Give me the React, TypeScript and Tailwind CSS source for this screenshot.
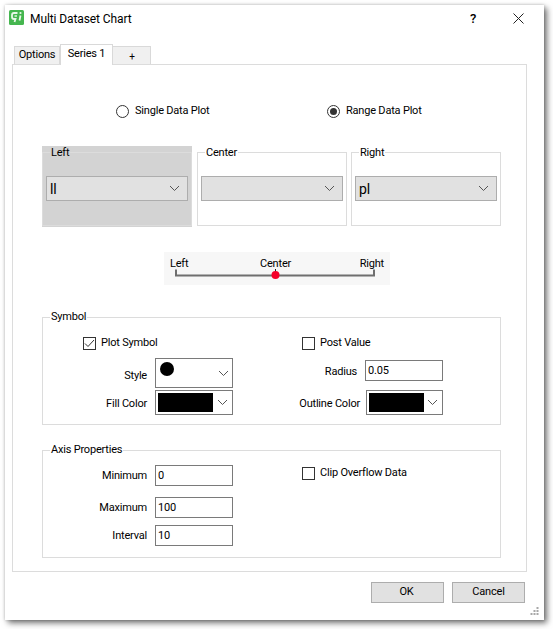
const font = "font-['Roboto','Liberation_Sans',sans-serif]";

function Chevron() {
  return (
    <svg width="11" height="7" viewBox="0 0 11 7" className="shrink-0">
      <path d="M1 1 L5.5 5.5 L10 1" fill="none" stroke="#555" strokeWidth="1" />
    </svg>
  );
}

function AppIcon() {
  return (
    <svg width="15" height="15" viewBox="0 0 15 15" className="-mt-[2px]">
      <rect width="15" height="15" rx="1.5" fill="#45b64f" />
      <path d="M8.5 3 H5 Q3 3 3 5 V7 Q3 9 5 9 H6.5 L5.5 12" fill="none" stroke="#e8f7e8" strokeWidth="1.8" />
      <path d="M5.5 6 H8" stroke="#e8f7e8" strokeWidth="1.4" />
      <circle cx="11.5" cy="3" r="1.1" fill="#e8f7e8" />
      <path d="M11.5 5.5 L10.5 10.5" stroke="#e8f7e8" strokeWidth="1.8" />
    </svg>
  );
}

function Radio({ label, checked }: { label: string; checked?: boolean }) {
  return (
    <div className="flex items-center gap-[6px]">
      <div className="w-[13px] h-[13px] rounded-full border border-[#333] flex items-center justify-center bg-white">
        {checked && <div className="w-[7px] h-[7px] rounded-full bg-[#333]" />}
      </div>
      <span>{label}</span>
    </div>
  );
}

function Check({ label, checked }: { label: string; checked?: boolean }) {
  return (
    <div className="flex items-center gap-[5px] h-[14px]">
      <div className="w-[13px] h-[13px] border border-[#333] bg-white flex items-center justify-center">
        {checked && (
          <svg width="11" height="11" viewBox="0 0 11 11">
            <path d="M1 5.5 L4 8.5 L10 2" fill="none" stroke="#333" strokeWidth="1" />
          </svg>
        )}
      </div>
      <span>{label}</span>
    </div>
  );
}

function DataGroup({ label, value, active }: { label: string; value: string; active?: boolean }) {
  return (
    <div className={`w-[150px] h-[81px] pt-[6px] ${active ? "bg-[#d3d3d3]" : ""}`}>
      <div className="relative h-[74px] border border-[#dcdcdc] pt-[23px]">
        <span className={`absolute left-[7px] -top-[7px] leading-[14px] px-[1px] ${active ? "bg-[#d3d3d3]" : "bg-white"}`}>
          {label}
        </span>
        <div className="ml-[3px] w-[142px] h-[25px] bg-[#e1e1e1] border border-[#adadad] flex items-center justify-between pl-[3px] pr-[7px]">
          <span className="text-[14px] leading-none">{value}</span>
          <Chevron />
        </div>
      </div>
    </div>
  );
}

function Group({ label, children }: { label: string; children: React.ReactNode }) {
  return (
    <div className="relative ml-[29px] w-[459px] h-[108px] border border-[#dcdcdc] flex">
      <span className="absolute left-[7px] -top-[8px] bg-white px-[1px] leading-[14px]">{label}</span>
      {children}
    </div>
  );
}

function Field({ label, labelWidth, value, labelPad = "pt-[1px]" }: { label: string; labelWidth: string; value: string; labelPad?: string }) {
  return (
    <div className="flex items-center">
      <span className={`${labelWidth} ${labelPad} text-right mr-[8px] shrink-0`}>{label}</span>
      <input
        readOnly
        defaultValue={value}
        className="w-[78px] h-[21px] border border-[#7a7a7a] bg-white px-[2px] outline-none"
      />
    </div>
  );
}

function ColorSelect({ width }: { width: string }) {
  return (
    <div className={`${width} h-[25px] border border-[#7a7a7a] bg-white flex items-center justify-between pl-[2px] pr-[4px]`}>
      <div className="w-[55px] h-[19px] bg-black" />
      <Chevron />
    </div>
  );
}

export default function App() {
  return (
    <div className={`w-[553px] h-[629px] bg-white pt-[5px] pl-[5px] text-[11px] tracking-[-0.2px] text-black ${font}`}>
      <div className="relative w-[539px] h-[615px] bg-white shadow-[3px_3px_6px_rgba(0,0,0,0.55),0_0_3px_rgba(0,0,0,0.2)]">
        {/* Title bar */}
        <div className="h-[26px] flex items-center pl-[4px] pt-[1px]">
          <AppIcon />
          <span className="ml-[6px] text-[12px] tracking-[-0.1px]">Multi Dataset Chart</span>
          <span className="ml-auto font-medium text-[13px]">?</span>
          <svg width="11" height="11" viewBox="0 0 11 11" className="ml-[37px] mr-[20px]">
            <path d="M0.5 0.5 L10.5 10.5 M10.5 0.5 L0.5 10.5" stroke="#222" strokeWidth="1" />
          </svg>
        </div>

        {/* Tabs */}
        <div className="mt-[13px] ml-[9px] h-[20px] flex items-end relative z-10">
          <div className="w-[46px] h-[18px] bg-[#f0f0f0] border border-[#d9d9d9] border-b-0 flex items-center justify-center">Options</div>
          <div className="w-[53px] h-[21px] -mb-px bg-white border border-[#d9d9d9] border-b-0 flex items-start justify-center pt-[1px]">Series 1</div>
          <div className="w-[38px] h-[18px] bg-[#f0f0f0] border border-[#d9d9d9] border-b-0 border-l-0 flex items-center justify-center pt-[2px] pl-[1px] text-[10px]">+</div>
        </div>

        {/* Tab page */}
        <div className="ml-[7px] w-[515px] h-[508px] border border-[#dcdcdc] bg-white">
          <div className="mt-[38px] ml-[103px] h-[16px] flex items-center">
            <div className="w-[211px]"><Radio label="Single Data Plot" /></div>
            <Radio label="Range Data Plot" checked />
          </div>

          <div className="mt-[27px] ml-[29px] flex gap-[5px]">
            <DataGroup label="Left" value="ll" active />
            <DataGroup label="Center" value="" />
            <div className="-ml-px"><DataGroup label="Right" value="pl" /></div>
          </div>

          {/* Position slider */}
          <div className="mt-[25px] ml-[151px] w-[226px] h-[33px] bg-[#f7f7f7]">
            <div className="flex justify-between pl-[6px] pr-[6px] pt-[6px] leading-[11px]">
              <span>Left</span>
              <span className="pl-[3px]">Center</span>
              <span>Right</span>
            </div>
            <svg width="226" height="16" viewBox="0 0 226 16" className="block">
              <path d="M12 0.5 V6.5 H210 V0.5" fill="none" stroke="#6f6f6f" strokeWidth="2" />
              <path d="M111.5 0 V3" stroke="#222" strokeWidth="1" />
              <circle cx="111.5" cy="6" r="4" fill="#f5002a" />
            </svg>
          </div>

          <div className="mt-[32px]">
            <Group label="Symbol">
              <div className="w-[212px]">
                <div className="mt-[18px] ml-[40px]"><Check label="Plot Symbol" checked /></div>
                <div className="mt-[8px] flex items-center">
                  <span className="w-[104px] text-right mr-[8px] pt-[7px]">Style</span>
                  <div className="relative w-[78px] h-[30px] border border-[#7a7a7a] bg-white flex items-center justify-end pr-[3px]">
                    <div className="absolute left-[4px] top-[3px] w-[14px] h-[14px] rounded-full bg-black" />
                    <Chevron />
                  </div>
                </div>
                <div className="mt-[2px] flex items-center">
                  <span className="w-[104px] text-right mr-[8px] pt-[3px]">Fill Color</span>
                  <ColorSelect width="w-[78px]" />
                </div>
              </div>
              <div className="flex-1">
                <div className="mt-[18px] ml-[47px]"><Check label="Post Value" /></div>
                <div className="mt-[10px]"><Field label="Radius" labelWidth="w-[102px]" value="0.05" labelPad="pt-[4px]" /></div>
                <div className="mt-[9px] flex items-center">
                  <span className="w-[105px] text-right mr-[6px] pt-[3px]">Outline Color</span>
                  <ColorSelect width="w-[77px]" />
                </div>
              </div>
            </Group>
          </div>

          <div className="mt-[25px]">
            <Group label="Axis Properties">
              <div className="w-[212px]">
                <div className="mt-[14px]"><Field label="Minimum" labelWidth="w-[104px]" value="0" /></div>
                <div className="mt-[11px]"><Field label="Maximum" labelWidth="w-[104px]" value="100" /></div>
                <div className="mt-[7px]"><Field label="Interval" labelWidth="w-[104px]" value="10" /></div>
              </div>
              <div className="flex-1">
                <div className="mt-[15px] ml-[47px]"><Check label="Clip Overflow Data" /></div>
              </div>
            </Group>
          </div>
        </div>

        {/* Footer buttons */}
        <div className="mt-[10px] pr-[19px] flex justify-end gap-[8px]">
          <button className="w-[73px] h-[21px] bg-[#e1e1e1] border border-[#adadad] pr-[2px]">OK</button>
          <button className="w-[73px] h-[21px] bg-[#e1e1e1] border border-[#adadad]">Cancel</button>
        </div>

        {/* Resize grip */}
        <svg width="9" height="9" viewBox="0 0 9 9" className="absolute right-[5px] bottom-[4px]">
          <g fill="#a8a8a8">
            <rect x="6.5" y="0" width="2" height="2" />
            <rect x="3.5" y="3" width="2" height="2" />
            <rect x="6.5" y="3" width="2" height="2" />
            <rect x="0.5" y="6" width="2" height="2" />
            <rect x="3.5" y="6" width="2" height="2" />
            <rect x="6.5" y="6" width="2" height="2" />
          </g>
        </svg>
      </div>
    </div>
  );
}
